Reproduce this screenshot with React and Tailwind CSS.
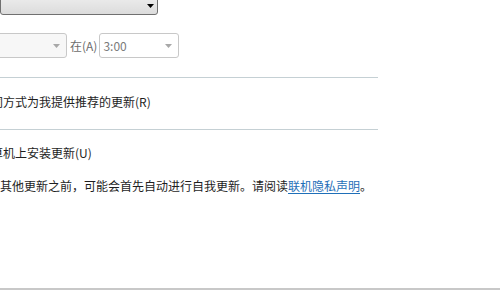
import React from 'react';

const font = { fontFamily: '"Noto Sans CJK SC", "Microsoft YaHei", sans-serif' };

function Arrow({ className }) {
  return (
    <svg width="7" height="4" viewBox="0 0 7 4" className={className}>
      <path d="M0 0H7L3.5 4Z" fill="currentColor" />
    </svg>
  );
}

export default function App() {
  return (
    <div className="relative w-[500px] h-[290px] overflow-hidden bg-white text-[12px] text-[#1e1e1e]" style={font}>
      {/* top dropdown, mostly scrolled out */}
      <div className="-mt-[10px] w-[158px] h-[25px] border border-[#707070] rounded-[3px] bg-gradient-to-b from-[#f2f2f2] to-[#dcdcdc] flex items-end justify-end pr-[3px] pb-[6px]">
        <Arrow className="text-black" />
      </div>

      {/* schedule row */}
      <div className="mt-[18px] flex items-center h-[25px]">
        <div className="-ml-[4px] w-[71px] h-[25px] border border-[#c8c8c8] rounded-[3px] bg-[#f7f7f7] flex items-center justify-end pr-[6px]">
          <Arrow className="text-[#a8a8a8]" />
        </div>
        <span className="ml-[3px] text-[#6d6d6d]">在(A)</span>
        <div className="ml-[2px] w-[80px] h-[25px] border border-[#c8c8c8] rounded-[3px] bg-white flex items-center justify-between pl-[3px] pr-[6px] text-[#7a7a7a]">
          <span>3:00</span>
          <Arrow className="text-[#a8a8a8]" />
        </div>
      </div>

      <div className="mt-[19px] w-[378px] h-px bg-[#c5d0d4]" />

      <div className="mt-[15px] -ml-[9px] whitespace-nowrap leading-[17px]">同方式为我提供推荐的更新(R)</div>

      <div className="mt-[19px] w-[378px] h-px bg-[#c5d0d4]" />

      <div className="mt-[14px] -ml-[9px] whitespace-nowrap leading-[17px]">算机上安装更新(U)</div>

      <div className="mt-[16px] whitespace-nowrap leading-[17px]">
        其他更新之前，可能会首先自动进行自我更新。请阅读
        <a className="text-[#1f6fb8] underline underline-offset-2">联机隐私声明</a>。
      </div>

      <div className="absolute left-0 right-0 bottom-0 h-[2px] bg-[#c8c8c8]" />
    </div>
  );
}
